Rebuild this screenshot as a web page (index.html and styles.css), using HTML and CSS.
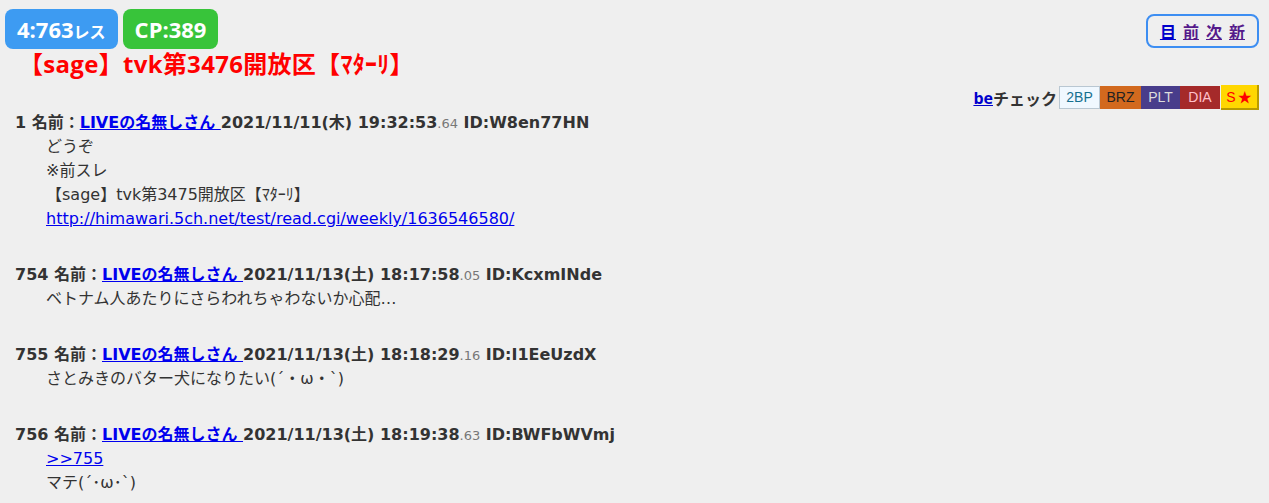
FILE: index.html
```html
<!DOCTYPE html>
<html lang="ja">
<head>
  <meta charset="UTF-8" />
  <title>【sage】tvk第3476開放区【ﾏﾀｰﾘ】</title>
  <link rel="stylesheet" href="styles.css">
</head>
<body>
  <div class="top">
    <div class="top-left">
      <div class="badges">
        <span class="badge badge-res">4:763<small>レス</small></span>
        <span class="badge badge-cp">CP:389</span>
      </div>
      <h1 class="title">【sage】tvk第3476開放区【ﾏﾀｰﾘ】</h1>
    </div>
    <nav class="pager">
      <a href="#" class="link">目</a>
      <a href="#" class="visited">前</a>
      <a href="#" class="visited">次</a>
      <a href="#" class="visited">新</a>
    </nav>
  </div>

  <div class="be-row">
    <a href="#" class="be-link">be</a><span class="be-label">チェック</span>
    <span class="rank rank-2bp">2BP</span>
    <span class="rank rank-brz">BRZ</span>
    <span class="rank rank-plt">PLT</span>
    <span class="rank rank-dia">DIA</span>
    <span class="rank rank-star">S<span class="star">★</span></span>
  </div>

  <div class="thread">
    <div class="post">
      <div class="meta">1 名前：<a href="#" class="name">LIVEの名無しさん </a>2021/11/11(木) 19:32:53<span class="ms">.64</span> ID:W8en77HN</div>
      <div class="message">
        <div>どうぞ</div>
        <div>※前スレ</div>
        <div>【sage】tvk第3475開放区【ﾏﾀｰﾘ】</div>
        <div><a href="#">http://himawari.5ch.net/test/read.cgi/weekly/1636546580/</a></div>
      </div>
    </div>

    <div class="post">
      <div class="meta">754 名前：<a href="#" class="name">LIVEの名無しさん </a>2021/11/13(土) 18:17:58<span class="ms">.05</span> ID:KcxmINde</div>
      <div class="message">
        <div>ベトナム人あたりにさらわれちゃわないか心配…</div>
      </div>
    </div>

    <div class="post">
      <div class="meta">755 名前：<a href="#" class="name">LIVEの名無しさん </a>2021/11/13(土) 18:18:29<span class="ms">.16</span> ID:I1EeUzdX</div>
      <div class="message">
        <div>さとみきのバター犬になりたい(´・ω・`)</div>
      </div>
    </div>

    <div class="post">
      <div class="meta">756 名前：<a href="#" class="name">LIVEの名無しさん </a>2021/11/13(土) 18:19:38<span class="ms">.63</span> ID:BWFbWVmj</div>
      <div class="message">
        <div><a href="#">&gt;&gt;755</a></div>
        <div>マテ(´･ω･`)</div>
      </div>
    </div>
  </div>
</body>
</html>
```

FILE: styles.css
```css
body {
  margin: 0;
  padding: 9px 10px 0 5px;
  background: #efefef;
  color: #333;
  font-family: "DejaVu Sans", "Noto Sans CJK JP", sans-serif;
  font-size: 16px;
}
a {
  color: #0000ee;
}
.top {
  display: flex;
  justify-content: space-between;
  align-items: flex-start;
}
.badges {
  display: flex;
  gap: 5px;
}
.badge {
  display: inline-block;
  height: 40px;
  line-height: 40px;
  padding: 0 12px;
  border-radius: 8px;
  color: #fff;
  font-weight: 700;
  font-size: 22px;
  font-family: "Open Sans", "Noto Sans CJK JP", sans-serif;
}
.badge small {
  font-size: 16px;
}
.badge-res {
  background: #3d9bf2;
}
.badge-cp {
  background: #38c43a;
}
.title {
  margin: 0 0 0 14px;
  color: #f00;
  font-size: 24px;
  line-height: 30px;
  font-weight: 700;
  letter-spacing: 0.3px;
  font-family: "Open Sans", "Noto Sans CJK JP", sans-serif;
}
.pager {
  margin-top: 5px;
  display: flex;
  gap: 7px;
  padding: 4px 12px;
  border: 2px solid #3d8ef2;
  border-radius: 8px;
  font-weight: 700;
  font-size: 16px;
  line-height: 22px;
  font-family: "Noto Sans CJK JP", sans-serif;
}
.pager .link {
  color: #0000cc;
}
.pager .visited {
  color: #551a8b;
}
.be-row {
  display: flex;
  justify-content: flex-end;
  align-items: center;
  margin-top: 6px;
  font-weight: 700;
  font-family: "Open Sans", "Noto Sans CJK JP", sans-serif;
}
.be-link {
  color: #0000cc;
}
.be-label {
  margin-right: 2px;
}
.rank {
  display: inline-block;
  height: 23px;
  line-height: 23px;
  text-align: center;
  font-size: 14px;
  font-weight: 400;
  font-family: "Liberation Sans", "Noto Sans CJK JP", sans-serif;
  box-sizing: border-box;
}
.rank-2bp {
  width: 41px;
  background: #f0f8ff;
  color: #16708f;
  border: 1px solid #b9c7d2;
  line-height: 21px;
}
.rank-brz {
  width: 41px;
  background: #d2691e;
  color: #222;
}
.rank-plt {
  width: 39px;
  background: #483d8b;
  color: #ddd;
}
.rank-dia {
  width: 40px;
  background: #a52a2a;
  color: #ffc0cb;
}
.rank-star {
  width: 38px;
  background: #ffd700;
  color: #f00;
  border-right: 2px solid #b89a00;
  border-bottom: 2px solid #b89a00;
  margin-left: 1px;
  height: 25px;
  line-height: 24px;
}
.star {
  margin-left: 2px;
}
.thread {
  margin-top: 1px;
  padding-left: 10px;
}
.post {
  margin-bottom: 32px;
}
.meta {
  font-weight: 700;
  line-height: 24px;
  height: 24px;
}
.meta .name {
  color: #0000ee;
}
.ms {
  font-size: 13px;
  font-weight: 400;
  color: #777;
}
.message {
  padding-left: 31px;
}
.message div {
  line-height: 24px;
  height: 24px;
}
```
